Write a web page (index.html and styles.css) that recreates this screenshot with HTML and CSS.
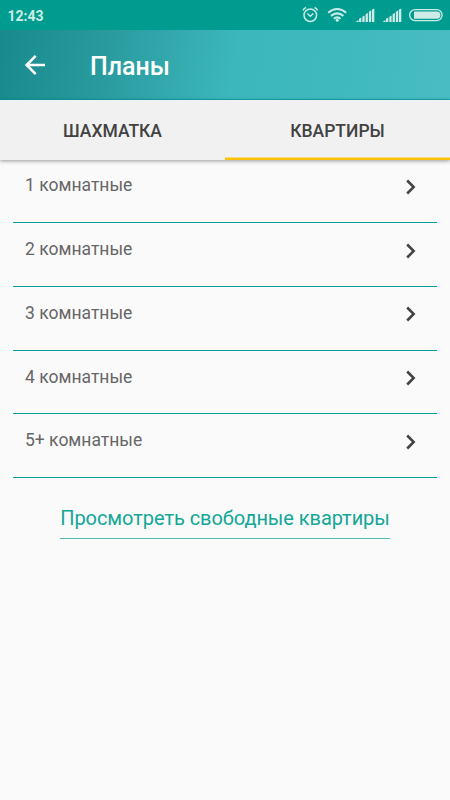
FILE: index.html
```html
<!DOCTYPE html>
<html lang="ru">
<head>
<meta charset="utf-8">
<title>Планы</title>
<link rel="stylesheet" href="styles.css">
</head>
<body>
<div class="status">
  <span class="clock">12:43</span>
  <svg class="indicators" width="150" height="30" viewBox="300 0 150 30" fill="none" stroke="#cdece8">
    <circle cx="310.3" cy="15.2" r="6.3" stroke-width="1.5"/>
    <path d="M307.3 13.5l3 2.700 3-2.700M303 10.500q.6-2 3-3M317.600 10.500q-.6-2-3-3" stroke-width="1.400"/>
    <path d="M328.200 12.700q9-7.400 18 0M331 15.900q6.200-5 12.400 0M333.800 18.700q3.400-2.600 6.800 0" stroke-width="2"/>
    <circle cx="337.200" cy="20.200" r="1.500" fill="#cdece8" stroke="none"/>
    <g id="signal" fill="#cdece8" stroke="none">
      <path d="M355.500 22l3-2v2zM359 18.700l2.300-1.300V22H359zM362.300 16.700l2.300-1.300V22h-2.300zM365.600 14.300l2.300-1.500V22h-2.300zM368.900 11.700l2.300-1.500V22h-2.300zM372 9.500l2.300-1V22H372z"/>
    </g>
    <use href="#signal" x="27"/>
    <rect x="409.600" y="9.600" width="32.500" height="11" rx="5.500" stroke-width="1.300"/>
    <path d="M414 11.500h22.800a3.600 3.600 0 0 1 0 7.200H414z" fill="#cdece8" stroke="none"/>
  </svg>
</div>
<header class="toolbar">
  <svg class="back" width="22" height="22" viewBox="0 0 22 22" fill="none" stroke="#fff" stroke-width="2.500"><path d="M21 11H2.800M11.700 1.900L2.600 11l9.100 9.100"/></svg>
  <h1 class="title">Планы</h1>
</header>
<nav class="tabs">
  <a class="tab">ШАХМАТКА</a>
  <a class="tab active">КВАРТИРЫ</a>
</nav>
<main>
  <ul class="rooms">
    <li class="room"><span>1 комнатные</span><svg class="chevron" viewBox="0 0 10 16"><path d="M1.200 1.500L7.700 8l-6.500 6.500"/></svg></li>
    <li class="room"><span>2 комнатные</span><svg class="chevron" viewBox="0 0 10 16"><path d="M1.200 1.500L7.700 8l-6.500 6.500"/></svg></li>
    <li class="room"><span>3 комнатные</span><svg class="chevron" viewBox="0 0 10 16"><path d="M1.200 1.500L7.700 8l-6.500 6.500"/></svg></li>
    <li class="room"><span>4 комнатные</span><svg class="chevron" viewBox="0 0 10 16"><path d="M1.200 1.500L7.700 8l-6.500 6.500"/></svg></li>
    <li class="room"><span>5+ комнатные</span><svg class="chevron" viewBox="0 0 10 16"><path d="M1.200 1.500L7.700 8l-6.500 6.500"/></svg></li>
  </ul>
  <a class="free">Просмотреть свободные квартиры</a>
</main>
</body>
</html>
```
FILE: styles.css
```css
* { box-sizing: border-box; }
body {
  margin: 0;
  height: 800px;
  overflow: hidden;
  background: #fafafa;
  font-family: Roboto, sans-serif;
}
.status {
  display: flex;
  justify-content: space-between;
  height: 30px;
  padding-left: 7.500px;
  background: #009c8f;
  color: #cdece8;
}
.clock { font-size: 14px; font-weight: 700; line-height: 32px; }
.toolbar {
  display: flex;
  align-items: center;
  height: 70px;
  padding-left: 24px;
  border-bottom: 1px solid rgba(0, 165, 175, .7);
  background: linear-gradient(100deg, #188a8d 0%, #28999d 22%, #3cb7bb 52%, #3fb9be 75%, #48bcc3 100%) border-box;
}
.title {
  margin: 5px 0 0 44px;
  color: #fff;
  font-size: 25px;
  font-weight: 500;
  line-height: 30px;
}
.tabs {
  position: relative;
  display: flex;
  height: 60px;
  background: #f1f1f1;
  box-shadow: 0 1px 4px rgba(0, 0, 0, .4);
}
.tab {
  flex: 1;
  color: #424242;
  font-size: 17.500px;
  font-weight: 500;
  line-height: 62px;
  text-align: center;
}
.active { box-shadow: inset 0 -2.500px #ffc107; }
main { display: flex; flex-direction: column; align-items: center; }
.rooms {
  width: 424px;
  margin: 0;
  padding: 0;
  list-style: none;
}
.room {
  display: flex;
  justify-content: space-between;
  height: 63.750px;
  padding: 15px 21px 0 12px;
  border-bottom: 1px solid #00a294;
  color: #666;
  font-size: 17.500px;
  line-height: 22px;
}
.room:first-child { height: 63px; padding-top: 14.400px; }
.chevron {
  width: 10px;
  height: 16px;
  margin-top: 4.500px;
  fill: none;
  stroke: #424242;
  stroke-width: 2.500;
}
.free {
  margin-top: 28px;
  padding-bottom: 7px;
  border-bottom: 1px solid #4fbdb3;
  color: #12a797;
  font-size: 20px;
  letter-spacing: -.065px;
  line-height: 25px;
}
```
